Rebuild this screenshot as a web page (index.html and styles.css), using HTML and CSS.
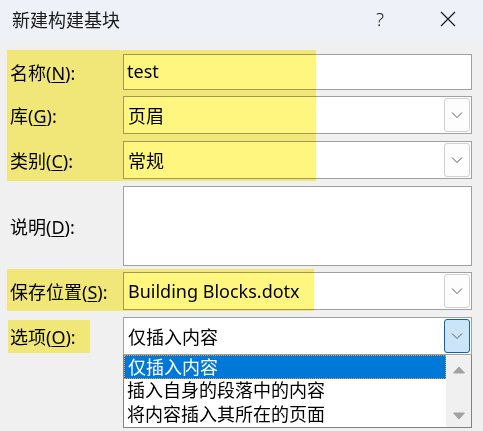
FILE: index.html
```html
<!DOCTYPE html>
<html lang="zh-CN">
<head>
    <meta charset="UTF-8">
    <title>新建构建基块</title>
    <link rel="stylesheet" href="styles.css">
</head>
<body>
    <div class="window">
        <div class="titlebar">
            <span class="title">新建构建基块</span>
            <span class="help">?</span>
            <svg class="close" width="16" height="16" viewBox="0 0 16 16">
                <path d="M1 1 L15 15 M15 1 L1 15" stroke="#1a1a1a" stroke-width="1.2" fill="none"/>
            </svg>
        </div>

        <div class="form">
            <div class="row row-name">
                <label>名称(<u>N</u>):</label>
                <div class="field">test</div>
            </div>
            <div class="row">
                <label>库(<u>G</u>):</label>
                <div class="field combo">
                    <span>页眉</span>
                    <span class="drop"><svg width="12" height="8" viewBox="0 0 12 8"><path d="M1 1.5 L6 6.5 L11 1.5" stroke="#5a5a5a" stroke-width="1" fill="none"/></svg></span>
                </div>
            </div>
            <div class="row">
                <label>类别(<u>C</u>):</label>
                <div class="field combo">
                    <span>常规</span>
                    <span class="drop"><svg width="12" height="8" viewBox="0 0 12 8"><path d="M1 1.5 L6 6.5 L11 1.5" stroke="#5a5a5a" stroke-width="1" fill="none"/></svg></span>
                </div>
            </div>
            <div class="row row-desc">
                <label>说明(<u>D</u>):</label>
                <div class="field"></div>
            </div>
            <div class="row row-save">
                <label>保存位置(<u>S</u>):</label>
                <div class="field combo">
                    <span>Building Blocks.dotx</span>
                    <span class="drop"><svg width="12" height="8" viewBox="0 0 12 8"><path d="M1 1.5 L6 6.5 L11 1.5" stroke="#5a5a5a" stroke-width="1" fill="none"/></svg></span>
                </div>
            </div>
            <div class="row row-opt">
                <label>选项(<u>O</u>):</label>
                <div class="opt-wrap">
                    <div class="field combo">
                        <span>仅插入内容</span>
                        <span class="drop focused"><svg width="12" height="8" viewBox="0 0 12 8"><path d="M1 1.5 L6 6.5 L11 1.5" stroke="#5a5a5a" stroke-width="1" fill="none"/></svg></span>
                    </div>
                    <div class="list">
                        <div class="items">
                            <div class="item selected">仅插入内容</div>
                            <div class="item">插入自身的段落中的内容</div>
                            <div class="item">将内容插入其所在的页面</div>
                        </div>
                        <div class="scroll">
                            <svg width="14" height="8" viewBox="0 0 14 8"><path d="M1.5 7 L7 1 L12.5 7 Z" fill="#a3a3a3" stroke="#a3a3a3" stroke-linejoin="round"/></svg>
                            <svg width="14" height="8" viewBox="0 0 14 8"><path d="M1.5 1 L7 7 L12.5 1 Z" fill="#a3a3a3" stroke="#a3a3a3" stroke-linejoin="round"/></svg>
                        </div>
                    </div>
                </div>
            </div>
        </div>

        <div class="mark mark-top"></div>
        <div class="mark mark-save"></div>
        <div class="mark mark-opt"></div>
    </div>
</body>
</html>
```

FILE: styles.css
```css
body {
    margin: 0;
    background: #f0f0f0;
    font-family: "Noto Sans", "Noto Sans CJK SC", sans-serif;
    color: #000;
}

.window {
    position: relative;
    width: 483px;
    height: 431px;
    overflow: hidden;
    background: #f0f0f0;
}

.titlebar {
    height: 40px;
    background: #eef2f8;
    display: flex;
    align-items: center;
    padding-left: 12px;
    font-size: 18px;
    color: #1a1a1a;
}

.title {
    flex: 1;
    margin-top: -2px;
}

.help {
    font-family: "Noto Sans", sans-serif;
    font-size: 19px;
    font-weight: 300;
    margin-right: 56px;
    margin-top: -2px;
}

.close {
    margin-right: 27px;
    margin-top: -2px;
}

.form {
    padding: 14px 11px 0 10px;
    display: flex;
    flex-direction: column;
    gap: 7px;
}

.row {
    display: grid;
    grid-template-columns: 113px 1fr;
    align-items: center;
    height: 38px;
}

.row label {
    font-size: 18px;
}

.row u {
    text-underline-offset: 2px;
}

.row-name {
    height: 36px;
    margin-bottom: -1px;
}

.row-desc {
    height: 80px;
    margin-bottom: -1px;
}

.row-opt {
    height: auto;
    align-items: start;
}

.row-opt label {
    margin-top: 6px;
}

.field {
    box-sizing: border-box;
    height: 100%;
    background: #fff;
    border: 1px solid #a0a0a0;
    font-size: 18px;
    padding-left: 4px;
    display: flex;
    align-items: center;
}

.combo {
    justify-content: space-between;
    padding-right: 1px;
}

.row-name .field {
    padding-left: 3px;
    padding-bottom: 3px;
}

.drop {
    box-sizing: border-box;
    width: 26px;
    height: 34px;
    border: 1px solid #d0d0d0;
    border-radius: 3px;
    background: #fdfdfd;
    display: flex;
    align-items: center;
    justify-content: center;
}

.drop.focused {
    background: #cce4f7;
    border-color: #0a64b4;
    border-width: 1.5px;
}

.opt-wrap .combo {
    height: 38px;
}

.list {
    box-sizing: border-box;
    height: 73px;
    border: 1px solid #828282;
    border-top: none;
    background: #fff;
    display: flex;
}

.items {
    flex: 1;
}

.item {
    box-sizing: border-box;
    height: 24px;
    font-size: 18px;
    line-height: 22px;
    padding-left: 3px;
    white-space: nowrap;
}

.item.selected {
    background: #0078d7;
    color: #fff;
    border: 1px dotted #f0a030;
}

.scroll {
    width: 25px;
    background: #f0f0f0;
    display: flex;
    flex-direction: column;
    justify-content: space-between;
    align-items: center;
    padding: 11px 0 7px;
}

.mark {
    position: absolute;
    background: #fff67f;
    mix-blend-mode: multiply;
}

.mark-top {
    left: 7px;
    top: 50px;
    width: 309px;
    height: 131px;
}

.mark-save {
    left: 7px;
    top: 269px;
    width: 307px;
    height: 42px;
}

.mark-opt {
    left: 8px;
    top: 320px;
    width: 82px;
    height: 33px;
}
```
